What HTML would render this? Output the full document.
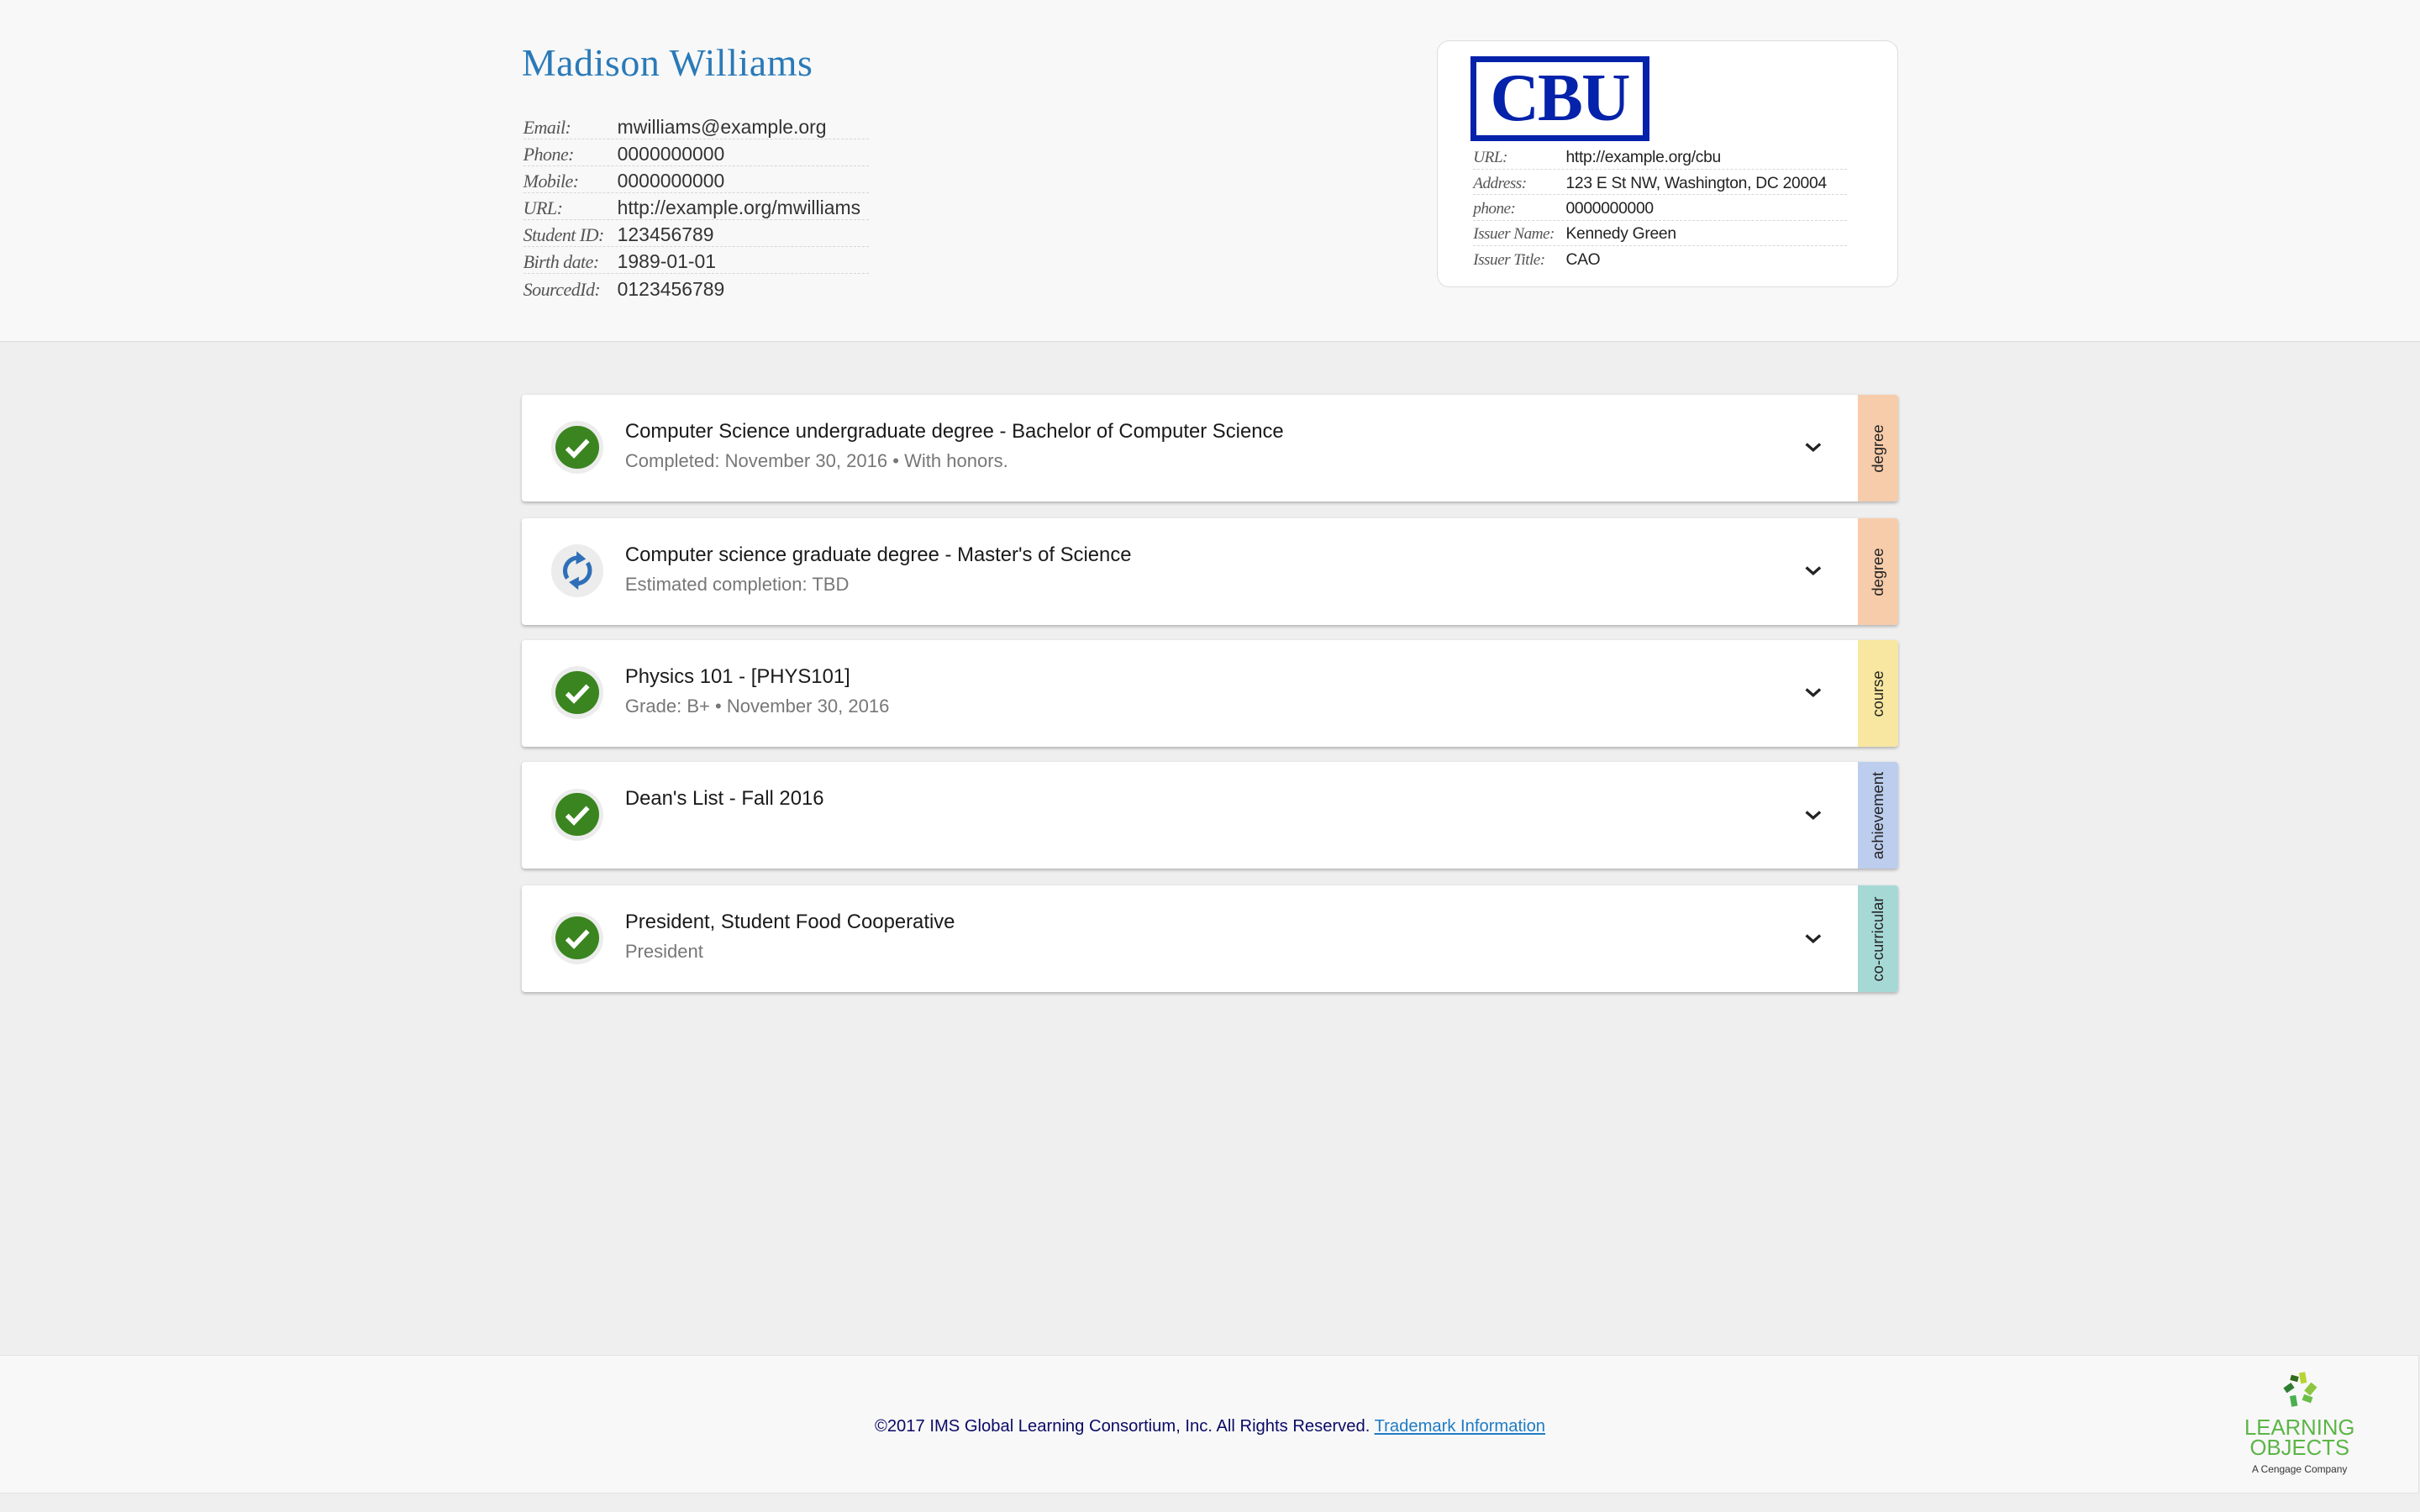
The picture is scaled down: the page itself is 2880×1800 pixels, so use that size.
<!DOCTYPE html>
<html><head><meta charset="utf-8"><style>
html,body{margin:0;padding:0;}
body{width:2880px;height:1800px;overflow:hidden;background:#efefef;}
#w{zoom:1.836735;width:1568px;height:980px;position:relative;font-family:"Liberation Sans",sans-serif;}
.hdr{position:absolute;left:0;top:0;width:1568px;height:221px;background:#f8f8f8;border-bottom:1px solid #dcdcdc;}
.name{position:absolute;left:338px;top:26px;font-family:"Liberation Serif",serif;font-size:25px;color:#2a7ab8;letter-spacing:0.3px;}
.t{position:absolute;}
.row{position:relative;height:17.4px;border-bottom:1px dashed #d6d6d6;box-sizing:border-box;}
.row .l{position:absolute;left:0;bottom:0;font-family:"Liberation Serif",serif;font-style:italic;color:#555;font-size:12px;white-space:nowrap;letter-spacing:-0.3px;}
.row .v{position:absolute;bottom:0;color:#333;font-size:12.5px;white-space:nowrap;}
.row.last{border-bottom:none}
.card{position:absolute;left:931px;top:26px;width:299px;height:160px;background:#fff;border:1px solid #ddd;border-radius:8px;box-sizing:border-box;}
.logo{position:absolute;left:21px;top:10px;width:116px;height:55px;background:#0522aa;box-sizing:border-box;padding:4px;}
.logo div{background:#fff;height:100%;text-align:center;font-family:"Liberation Serif",serif;font-weight:bold;color:#0522aa;font-size:44px;line-height:47px;letter-spacing:-1px;}
.crow{position:relative;height:16.5px;border-bottom:1px dashed #d6d6d6;box-sizing:border-box;}
.crow .l{position:absolute;left:0;bottom:1px;font-family:"Liberation Serif",serif;font-style:italic;color:#555;font-size:10.5px;white-space:nowrap;letter-spacing:-0.3px;}
.crow .v{position:absolute;left:60px;bottom:1px;color:#222;font-size:10.5px;white-space:nowrap;letter-spacing:-0.15px;}
.it{position:absolute;left:338px;width:892px;height:69px;background:#fff;box-shadow:0 1px 2px rgba(0,0,0,0.25);border-radius:2px;overflow:hidden;}
.ic{position:absolute;left:19px;top:17px;width:34px;height:34px;border-radius:50%;background:#ececec;}
.ic .g{position:absolute;left:3px;top:3px;width:28px;height:28px;border-radius:50%;background:#3a851f;}
.ti{position:absolute;left:67px;top:16px;font-size:13px;color:#1a1a1a;}
.su{position:absolute;left:67px;top:36px;font-size:12px;color:#777;}
.ch{position:absolute;left:830px;top:29px;}
.tag{position:absolute;right:0;top:0;width:26px;height:69px;}
.tag span{position:absolute;left:50%;top:50%;transform:translate(-50%,-50%) rotate(-90deg);font-size:10px;color:#222;white-space:nowrap;}
.ftr{position:absolute;left:0;top:878px;width:1567px;height:89px;background:#f8f8f8;border-top:1px solid #e2e2e2;border-bottom:1px solid #e2e2e2;border-right:1px solid #e2e2e2;}
.ft{position:absolute;left:0;width:1568px;top:40px;text-align:center;font-size:11px;color:#0a0a66;}
.ft a{color:#1f7cc4;text-decoration:underline;}
</style></head><body><div id="w">
<div class="hdr">
<div class="name">Madison Williams</div>
<div class="t" style="left:339px;top:73px;width:224px;">
<div class="row"><span class="l">Email:</span><span class="v" style="left:61px">mwilliams@example.org</span></div>
<div class="row"><span class="l">Phone:</span><span class="v" style="left:61px">0000000000</span></div>
<div class="row"><span class="l">Mobile:</span><span class="v" style="left:61px">0000000000</span></div>
<div class="row"><span class="l">URL:</span><span class="v" style="left:61px">http://example.org/mwilliams</span></div>
<div class="row"><span class="l">Student ID:</span><span class="v" style="left:61px">123456789</span></div>
<div class="row"><span class="l">Birth date:</span><span class="v" style="left:61px">1989-01-01</span></div>
<div class="row last"><span class="l">SourcedId:</span><span class="v" style="left:61px">0123456789</span></div>
</div>
<div class="card">
<div class="logo"><div>CBU</div></div>
<div style="position:absolute;left:23px;top:67px;width:242px;">
<div class="crow"><span class="l">URL:</span><span class="v">http://example.org/cbu</span></div>
<div class="crow"><span class="l">Address:</span><span class="v">123 E St NW, Washington, DC 20004</span></div>
<div class="crow"><span class="l">phone:</span><span class="v">0000000000</span></div>
<div class="crow"><span class="l">Issuer Name:</span><span class="v">Kennedy Green</span></div>
<div class="crow" style="border:none"><span class="l">Issuer Title:</span><span class="v">CAO</span></div>
</div>
</div>
</div>

<div class="it" style="top:256px"><div class="ic"><div class="g"><svg width="28" height="28" viewBox="0 0 28 28"><path d="M7.5 14.5 L12 19 L21 9.5" fill="none" stroke="#fff" stroke-width="3"/></svg></div></div>
<div class="ti">Computer Science undergraduate degree - Bachelor of Computer Science</div><div class="su">Completed: November 30, 2016 • With honors.</div>
<svg class="ch" width="14" height="10" viewBox="0 0 14 10"><path d="M2.5 3 L7 7 L11.5 3" fill="none" stroke="#222" stroke-width="1.8"/></svg>
<div class="tag" style="background:#f7ccab"><span>degree</span></div></div>

<div class="it" style="top:336px"><div class="ic"><svg width="34" height="34" viewBox="0 0 34 34"><path d="M10.5 22 A8.5 8.5 0 0 1 19 8.8" fill="none" stroke="#2f6fb8" stroke-width="2.8"/><path d="M16.5 4.5 L22.5 9.5 L16 13 Z" fill="#2f6fb8"/><path d="M23.5 12 A8.5 8.5 0 0 1 15 25.2" fill="none" stroke="#2f6fb8" stroke-width="2.8"/><path d="M17.5 29.5 L11.5 24.5 L18 21 Z" fill="#2f6fb8"/></svg></div>
<div class="ti">Computer science graduate degree - Master's of Science</div><div class="su">Estimated completion: TBD</div>
<svg class="ch" width="14" height="10" viewBox="0 0 14 10"><path d="M2.5 3 L7 7 L11.5 3" fill="none" stroke="#222" stroke-width="1.8"/></svg>
<div class="tag" style="background:#f7ccab"><span>degree</span></div></div>

<div class="it" style="top:415px"><div class="ic"><div class="g"><svg width="28" height="28" viewBox="0 0 28 28"><path d="M7.5 14.5 L12 19 L21 9.5" fill="none" stroke="#fff" stroke-width="3"/></svg></div></div>
<div class="ti">Physics 101 - [PHYS101]</div><div class="su">Grade: B+ • November 30, 2016</div>
<svg class="ch" width="14" height="10" viewBox="0 0 14 10"><path d="M2.5 3 L7 7 L11.5 3" fill="none" stroke="#222" stroke-width="1.8"/></svg>
<div class="tag" style="background:#f7e7a0"><span>course</span></div></div>

<div class="it" style="top:494px"><div class="ic"><div class="g"><svg width="28" height="28" viewBox="0 0 28 28"><path d="M7.5 14.5 L12 19 L21 9.5" fill="none" stroke="#fff" stroke-width="3"/></svg></div></div>
<div class="ti">Dean's List - Fall 2016</div>
<svg class="ch" width="14" height="10" viewBox="0 0 14 10"><path d="M2.5 3 L7 7 L11.5 3" fill="none" stroke="#222" stroke-width="1.8"/></svg>
<div class="tag" style="background:#bccded"><span>achievement</span></div></div>

<div class="it" style="top:574px"><div class="ic"><div class="g"><svg width="28" height="28" viewBox="0 0 28 28"><path d="M7.5 14.5 L12 19 L21 9.5" fill="none" stroke="#fff" stroke-width="3"/></svg></div></div>
<div class="ti">President, Student Food Cooperative</div><div class="su">President</div>
<svg class="ch" width="14" height="10" viewBox="0 0 14 10"><path d="M2.5 3 L7 7 L11.5 3" fill="none" stroke="#222" stroke-width="1.8"/></svg>
<div class="tag" style="background:#a6d9d6"><span>co-curricular</span></div></div>

<div class="ftr">
<div class="ft">©2017 IMS Global Learning Consortium, Inc. All Rights Reserved. <a>Trademark Information</a></div>
<svg style="position:absolute;left:1477px;top:10px" width="26" height="26" viewBox="0 0 26 26">
<rect x="13" y="1" width="4" height="7" fill="#b8d432" transform="rotate(-10 15 4)"/>
<rect x="18" y="8" width="5" height="7" fill="#8cc63f" transform="rotate(40 20 11)"/>
<rect x="15" y="16" width="6" height="4" fill="#6abd45" transform="rotate(20 18 18)"/>
<rect x="7" y="16" width="4" height="7" fill="#4caf50" transform="rotate(-10 9 19)"/>
<rect x="3" y="9" width="6" height="4" fill="#2e7d32" transform="rotate(-35 6 11)"/>
<rect x="7" y="3" width="5" height="3.5" fill="#33691e" transform="rotate(15 9 5)"/>
</svg>
<div style="position:absolute;left:1440px;top:41px;width:100px;text-align:center;color:#5cb547;font-size:14px;line-height:13px;">LEARNING<br>OBJECTS</div>
<div style="position:absolute;left:1440px;top:70px;width:100px;text-align:center;color:#333;font-size:6.5px;">A Cengage Company</div>
</div>
</div></body></html>
